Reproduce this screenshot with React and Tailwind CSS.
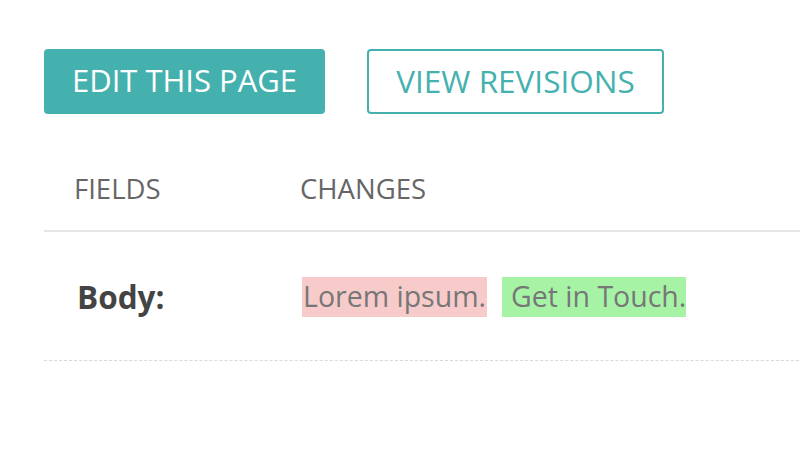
export default function App() {
  const font = { fontFamily: '"Open Sans", "Noto Sans", sans-serif' };
  return (
    <div className="w-[800px] h-[450px] bg-white overflow-hidden" style={font}>
      <div className="pl-[44px] pt-[49px]">
        <div className="flex gap-[42px]">
          <button className="w-[281px] h-[65px] rounded-[4px] bg-[#45b1ae] text-white text-[31px] leading-none flex items-center justify-center pb-[2px]">
            EDIT THIS PAGE
          </button>
          <button className="w-[297px] h-[65px] rounded-[4px] border-2 border-[#45b1ae] text-[#45b1ae] text-[31.5px] leading-none flex items-center justify-center pb-[2px]">
            VIEW REVISIONS
          </button>
        </div>
        <div className="mt-[50px] w-[800px]">
          <div className="flex h-[68px] items-center border-b-2 border-[#e6e6e6] text-[#666] text-[27.5px] pb-[16px]">
            <div className="w-[256px] pl-[30px]">FIELDS</div>
            <div>CHANGES</div>
          </div>
          <div className="flex h-[129px] items-center border-b border-dashed border-[#d9d9d9] pt-[1px]">
            <div className="w-[256px] pl-[33px] text-[#444] font-bold text-[31.5px]">Body:</div>
            <div className="flex gap-[15px] text-[#777] text-[28.5px] ml-[2px]">
              <span className="bg-[#f8cbcb] h-[40px] flex items-center pl-[1px] pr-[1px]">Lorem ipsum.</span>
              <span className="bg-[#a6f3a6] h-[40px] flex items-center pl-[9px] pr-[0px]">Get in Touch.</span>
            </div>
          </div>
        </div>
      </div>
    </div>
  );
}
